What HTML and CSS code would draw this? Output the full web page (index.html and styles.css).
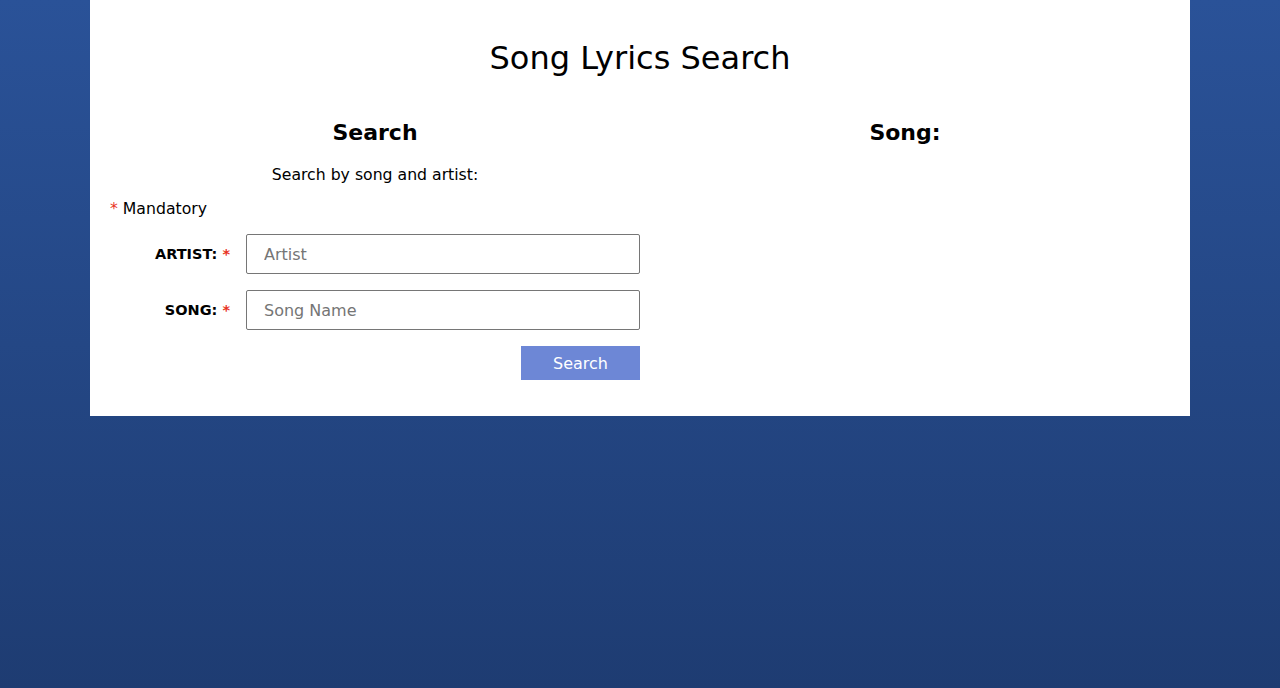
FILE: index.html
```html
<!DOCTYPE html>
<html lang="en">
<head>
<meta charset="utf-8">
<title>Song Lyrics Search</title>
<link rel="stylesheet" href="styles.css">
</head>
<body>
  <main class="page">
    <h1 class="title">Song Lyrics Search</h1>
    <div class="columns">
      <section class="col search-col">
        <h2 class="col-title">Search</h2>
        <p class="subtitle">Search by song and artist:</p>
        <p class="mandatory"><span class="req">*</span> Mandatory</p>
        <form class="form">
          <div class="row">
            <label class="label" for="artist">ARTIST: <span class="req">*</span></label>
            <input class="input" id="artist" type="text" placeholder="Artist">
          </div>
          <div class="row">
            <label class="label" for="song">SONG: <span class="req">*</span></label>
            <input class="input" id="song" type="text" placeholder="Song Name">
          </div>
          <div class="actions">
            <button class="btn" type="button">Search</button>
          </div>
        </form>
      </section>
      <section class="col song-col">
        <h2 class="col-title">Song:</h2>
      </section>
    </div>
  </main>
</body>
</html>
```

FILE: styles.css
```css
html, body {
  margin: 0;
  padding: 0;
  height: 100%;
}
body {
  background: linear-gradient(to bottom, #2a5298, #1e3c72);
  font-family: "DejaVu Sans", "Noto Sans", sans-serif;
  color: #000;
}
.page {
  width: 1100px;
  margin: 0 auto;
  background: #fff;
  padding: 36px 20px 36px;
  box-sizing: border-box;
}
.title {
  margin: 0;
  text-align: center;
  font-weight: 400;
  font-size: 32px;
  line-height: 44px;
}
.columns {
  display: flex;
  margin-top: 38px;
}
.col {
  flex: 1 1 0;
}
.col-title {
  margin: 0;
  text-align: center;
  font-size: 22px;
  font-weight: 700;
  line-height: 30px;
}
.subtitle {
  margin: 17px 0 0;
  text-align: center;
  font-size: 15.7px;
  line-height: 20px;
}
.mandatory {
  margin: 14px 0 0;
  font-size: 15.7px;
  line-height: 20px;
}
.req {
  color: #e8321e;
}
.form {
  margin-top: 15px;
}
.row {
  display: flex;
  align-items: center;
  gap: 16px;
  margin-bottom: 16px;
}
.label {
  width: 120px;
  text-align: right;
  font-weight: 700;
  font-size: 14.5px;
}
.input {
  flex: 1;
  height: 40px;
  box-sizing: border-box;
  border: 1px solid #767676;
  border-radius: 2px;
  padding: 0 17px;
  font-family: inherit;
  font-size: 16px;
  color: #333;
}
.input::placeholder {
  color: #757575;
}
.actions {
  display: flex;
  justify-content: flex-end;
}
.btn {
  width: 119px;
  height: 34px;
  border: none;
  background: #6d87d6;
  color: #fff;
  font-family: inherit;
  font-size: 16px;
  padding: 0;
}
```
